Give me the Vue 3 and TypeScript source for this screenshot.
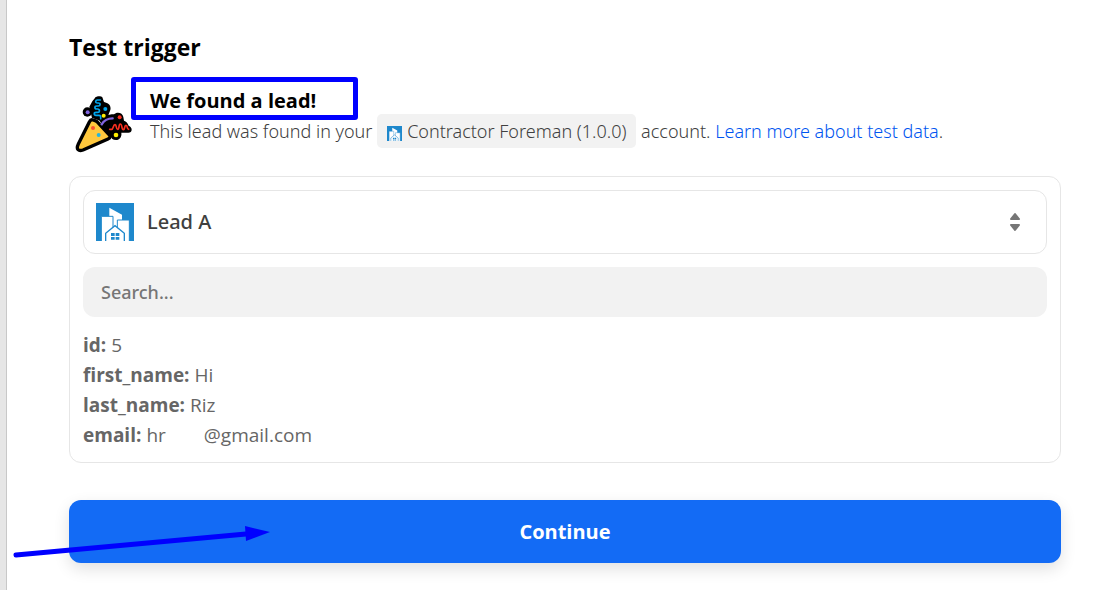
<script setup lang="ts">
import { ref } from 'vue'

interface Field {
  name: string
  value: string
  suffix?: string
}

const search = ref('')
const record = ref('Lead A')
const fields: Field[] = [
  { name: 'id', value: '5' },
  { name: 'first_name', value: 'Hi' },
  { name: 'last_name', value: 'Riz' },
  { name: 'email', value: 'hr', suffix: '@gmail.com' },
]
</script>

<template>
  <div class="page">
    <svg width="0" height="0" class="defs" aria-hidden="true">
      <symbol id="company-logo" viewBox="0 0 114 114">
        <rect width="114" height="114" fill="#1e88cc" />
        <path d="M40 114V14l38 21v79z" fill="#fff" />
        <path d="M16 118V40h35v78zM64 118V51h36v67z" fill="#fff" stroke="#1e88cc" stroke-width="3" />
        <path d="M29 118V91l28-23 28 23v27z" fill="#fff" stroke="#1e88cc" stroke-width="4" />
        <path d="M45 90h11v9H45zM59 90h11v9H59zM45 102h11v8H45zM59 102h11v8H59z" fill="#1e88cc" />
      </symbol>
    </svg>

    <main class="content">
      <h1>Test trigger</h1>

      <section class="notice">
        <svg class="party" viewBox="45 78 171 171" aria-hidden="true">
          <g fill="#000">
            <circle cx="82" cy="126" r="14" />
            <path d="M97 94c4-5 8-9 9-12 5-4 17-5 21 0l5 14c15 3 22 12 19 24l-8 20-18 14-29-10-8-34z" />
            <path d="M118 151c8-12 25-18 44-18 8-9 26-6 28 8l2 11c7 2 11 7 14 15 6 3 9 7 9 12s-4 9-10 9h-21c2 12-5 22-16 22-9 0-15-5-16-13l-14-12z" />
          </g>
          <path d="M99 150c-5-2-8 0-11 6L55 222c-8 17 1 22 14 18l75-33c7-3 8-8 3-13l-36-39c-4-3-8-4-12-5z" fill="#ffc83d" stroke="#000" stroke-width="10" stroke-linejoin="round" />
          <path d="M121 90h-9c-6 0-7 9 0 9h3c7 0 7 9 0 9h-5c-7 0-7 9 0 9h3c7 0 7 10 0 10h-5c-7 0-7 9 0 9h9c6 0 5 5 5 10" fill="none" stroke="#00a6ed" stroke-width="5" stroke-linecap="round" />
          <path d="M125 163c7-12 17-18 33-18" fill="none" stroke="#8065e0" stroke-width="7" stroke-linecap="round" />
          <path d="M149 178h6c5 0 4-14 10-14s2 14 8 14 2-16 8-16 3 17 9 17 2-13 8-13 1 12 8 12" fill="none" stroke="#f92f20" stroke-width="5" stroke-linecap="round" stroke-linejoin="round" />
          <circle cx="83" cy="127" r="6" fill="#8065e0" />
          <circle cx="136" cy="117" r="6" fill="#00a6ed" />
          <circle cx="131" cy="137" r="6" fill="#ffef00" />
          <circle cx="179" cy="142" r="6" fill="#f92f20" />
          <circle cx="168" cy="195" r="7" fill="#ffef00" />
          <circle cx="99" cy="174" r="6" fill="#f8512e" />
          <circle cx="116" cy="195" r="6" fill="#26b5dc" />
        </svg>
        <div class="notice-text">
          <h2>We found a lead!</h2>
          <p>
            This lead was found in your
            <span class="chip"><svg class="chip-logo" aria-hidden="true"><use href="#company-logo" /></svg>Contractor Foreman (1.0.0)</span>
            account. <a href="#">Learn more about test data</a>.
          </p>
          <span class="highlight" aria-hidden="true"></span>
        </div>
      </section>

      <section class="card">
        <div class="picker">
          <svg class="picker-logo" aria-hidden="true"><use href="#company-logo" /></svg>
          <select v-model="record" aria-label="Test record">
            <option>Lead A</option>
          </select>
          <svg class="sort" viewBox="0 0 12 20" aria-hidden="true">
            <path d="M6 2l4 5H2zM2 13h8l-4 5z" fill="#767676" stroke="#767676" stroke-width="2" stroke-linejoin="round" />
          </svg>
        </div>
        <input v-model="search" class="search" type="text" placeholder="Search..." aria-label="Search" />
        <dl>
          <div v-for="field in fields" :key="field.name" class="field">
            <dt>{{ field.name }}:</dt>
            <dd>{{ field.value }}<span v-if="field.suffix" class="suffix">{{ field.suffix }}</span></dd>
          </div>
        </dl>
      </section>

      <div class="action">
        <button type="button">Continue</button>
        <svg class="arrow" viewBox="0 0 260 46" aria-hidden="true">
          <path d="M6 35L236 14" stroke="#00f" stroke-width="5" stroke-linecap="round" />
          <path d="M235 6l25 6-24 9z" fill="#00f" />
        </svg>
      </div>
    </main>
  </div>
</template>

<style>
body {
  margin: 0;
  background: #fff;
}
</style>

<style scoped>
.page {
  box-sizing: border-box;
  min-height: 100vh;
  border-left: 6px solid #e6e6e6;
  font-family: "Open Sans", "Noto Sans", sans-serif;
  font-size: 18px;
  color: #666;
}
.defs {
  position: absolute;
}
.content {
  box-sizing: border-box;
  min-height: 100vh;
  border-left: 1px solid #c8c8c8;
  padding: 30px 54px 27px 62px;
}
h1 {
  margin: 0;
  font-size: 23px;
  line-height: 34px;
  font-weight: 700;
  color: #000;
}
.notice {
  display: flex;
  gap: 18px;
  margin-top: 24px;
  padding-left: 6px;
}
.party {
  flex: none;
  width: 57px;
  height: 57px;
  margin-top: 8px;
}
.notice-text {
  position: relative;
}
h2 {
  margin: 0;
  font-size: 20px;
  line-height: 26px;
  font-weight: 700;
  color: #000;
}
p {
  margin: 0;
  font-family: "Noto Sans", "Open Sans", sans-serif;
  font-weight: 300;
  line-height: 34px;
  color: #404040;
}
.chip {
  display: inline-block;
  padding: 0 10px;
  border-radius: 5px;
  background: #f2f2f2;
}
.chip-logo {
  width: 15px;
  height: 15px;
  margin-right: 5px;
  vertical-align: -3px;
}
a {
  color: #0055f0;
  text-decoration: none;
}
.highlight {
  position: absolute;
  box-sizing: border-box;
  left: -19px;
  top: -11px;
  width: 227px;
  height: 43px;
  border: 5px solid #00f;
  border-radius: 3px;
}
.card {
  margin-top: 23px;
  padding: 13px 13px 12px;
  border: 1px solid #e6e6e6;
  border-radius: 12px;
}
.picker {
  display: flex;
  align-items: center;
  padding: 12px;
  border: 1px solid #e6e6e6;
  border-radius: 12px;
}
.picker-logo {
  flex: none;
  width: 38px;
  height: 38px;
}
select {
  flex: 1;
  appearance: none;
  margin: 0;
  padding: 0 13px;
  border: 0;
  background: none;
  font: 500 20px/36px "Noto Sans", "Open Sans", sans-serif;
  color: #403f3e;
}
.sort {
  width: 12px;
  height: 20px;
  margin-right: 13px;
}
.search {
  display: block;
  box-sizing: border-box;
  width: 100%;
  height: 50px;
  margin-top: 13px;
  padding: 0 18px;
  border: 0;
  border-radius: 12px;
  background: #f2f2f2;
  font: 500 18px "Noto Sans", "Open Sans", sans-serif;
}
.search::placeholder {
  color: #767676;
}
dl {
  margin: 13px 0 0;
}
.field {
  display: flex;
  gap: 5px;
  font-size: 19px;
  line-height: 30px;
}
dt {
  font-weight: 700;
}
dd {
  margin: 0;
}
.suffix {
  margin-left: 38px;
}
.action {
  position: relative;
  margin-top: 37px;
}
button {
  display: block;
  width: 100%;
  height: 63px;
  border: 0;
  border-radius: 12px;
  background: #136bf5;
  box-shadow: 0 6px 16px rgba(0, 0, 0, 0.12);
  font: 700 20px "Open Sans", "Noto Sans", sans-serif;
  color: #fff;
}
.arrow {
  position: absolute;
  left: -59px;
  top: 20px;
  width: 260px;
  height: 46px;
  fill: none;
  pointer-events: none;
}
</style>
